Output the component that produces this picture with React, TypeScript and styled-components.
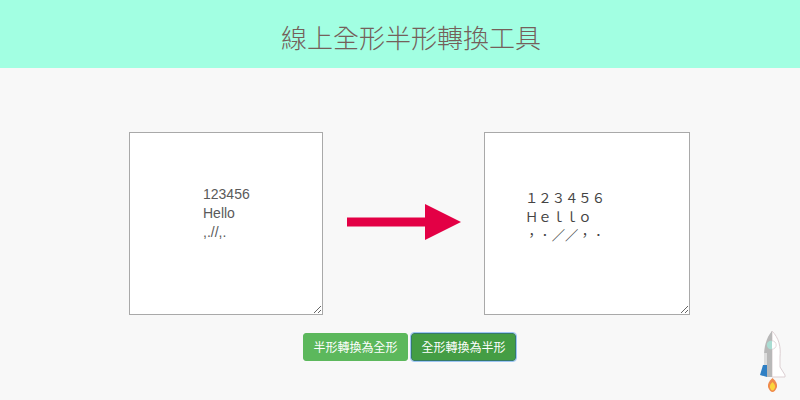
import React, { useState } from 'react'
import styled, { createGlobalStyle } from 'styled-components'

const GlobalStyle = createGlobalStyle`
  html,
  body {
    margin: 0;
    height: 100%;
    background-color: #f8f8f8;
    font-family: 'Liberation Sans', 'Noto Sans CJK TC', sans-serif;
  }
`

const Page = styled.div`
  position: relative;
  width: 800px;
  height: 400px;
  overflow: hidden;
`

const Header = styled.header`
  display: flex;
  align-items: center;
  justify-content: center;
  box-sizing: border-box;
  height: 68px;
  padding: 6px 0 0 22px;
  background-color: #a2ffe2;
`

const Title = styled.h1`
  margin: 0;
  color: #75605a;
  font-family: 'Noto Sans CJK TC', sans-serif;
  font-size: 26px;
  font-weight: 300;
  line-height: 1;
`

const Converter = styled.main`
  display: flex;
  align-items: center;
  margin-top: 64px;
  padding-left: 129px;
`

const Editor = styled.textarea<{ $wide?: boolean }>`
  box-sizing: border-box;
  width: ${(p) => (p.$wide ? 206 : 194)}px;
  height: 183px;
  margin: 0;
  padding: ${(p) => (p.$wide ? '56px 8px 0 40px' : '52px 8px 0 73px')};
  border: 1px solid #a9a9a9;
  border-radius: 0;
  outline: none;
  background: #ffffff;
  color: ${(p) => (p.$wide ? '#444444' : '#5a5a5a')};
  font-family: ${(p) =>
    p.$wide
      ? `'Noto Sans CJK TC', monospace`
      : `'Liberation Sans', sans-serif`};
  font-size: ${(p) => (p.$wide ? 13.33 : 14)}px;
  line-height: ${(p) => (p.$wide ? '18.5px' : '19px')};
`

const Arrow = styled.svg`
  display: block;
  flex: none;
  margin: 0 23px 4px 24px;
`

const Actions = styled.div`
  display: flex;
  gap: 3px;
  margin-top: 18px;
  padding-left: 303px;
`

const ConvertButton = styled.button<{ $active?: boolean }>`
  box-sizing: border-box;
  width: 105px;
  height: 28px;
  padding: 0;
  border: 1px solid ${(p) => (p.$active ? '#357a6a' : '#5cb85c')};
  border-radius: 3px;
  outline: ${(p) => (p.$active ? '1px solid #9ec5f5' : 'none')};
  background-color: ${(p) => (p.$active ? '#449d44' : '#5cb85c')};
  color: #ffffff;
  font-family: 'Noto Sans CJK TC', sans-serif;
  font-size: 12px;
  line-height: 1;
  cursor: pointer;
`

const Rocket = styled.svg`
  position: absolute;
  right: 5px;
  bottom: 0;
  display: block;
`

const INPUT = '123456\nHello\n,.//,.'
const OUTPUT = '１２３４５６\nＨｅｌｌｏ\n，．／／，．'

export default function App() {
  const [input, setInput] = useState(INPUT)
  const [output, setOutput] = useState(OUTPUT)

  return (
    <Page>
      <GlobalStyle />
      <Header>
        <Title>線上全形半形轉換工具</Title>
      </Header>
      <Converter>
        <Editor value={input} onChange={(e) => setInput(e.target.value)} />
        <Arrow width="114" height="36" viewBox="0 0 114 36">
          <path d="M0 13.5H78V0L114 18L78 36V22.5H0Z" fill="#e30045" />
        </Arrow>
        <Editor $wide value={output} onChange={(e) => setOutput(e.target.value)} />
      </Converter>
      <Actions>
        <ConvertButton>半形轉換為全形</ConvertButton>
        <ConvertButton $active>全形轉換為半形</ConvertButton>
      </Actions>
      <Rocket width="50" height="75" viewBox="0 0 50 75">
        <path d="M27 6C34 13 36 22 35 32V42L40 50V52H27Z" fill="#ffffff" stroke="#dccfd2" strokeWidth="1" />
        <path d="M27 6C21 13 19 22 19 32V40H22V52H27Z" fill="#b8b8b8" />
        <path d="M19 28H22V40H19Z" fill="#dcdcdc" />
        <path d="M18 40H22V52L15 50Z" fill="#2f7fc4" />
        <circle cx="26" cy="20" r="4.2" fill="#a9dcd2" />
        <path d="M27 15.8a4.2 4.2 0 0 1 0 8.4" fill="#ffffff" stroke="#dccfd2" strokeWidth="0.8" />
        <path d="M27.5 53C31 56 32.5 59 32 62C31 65 29 67 27.5 67C26 67 24 65 23 62C22.5 59 24 56 27.5 53Z" fill="#ef8a4c" />
        <path d="M27.5 57C29.5 59 30.5 60.5 30 62.5C29.4 64.5 28.4 65.5 27.5 65.5C26.6 65.5 25.6 64.5 25 62.5C24.5 60.5 25.5 59 27.5 57Z" fill="#fbd53c" />
      </Rocket>
    </Page>
  )
}
